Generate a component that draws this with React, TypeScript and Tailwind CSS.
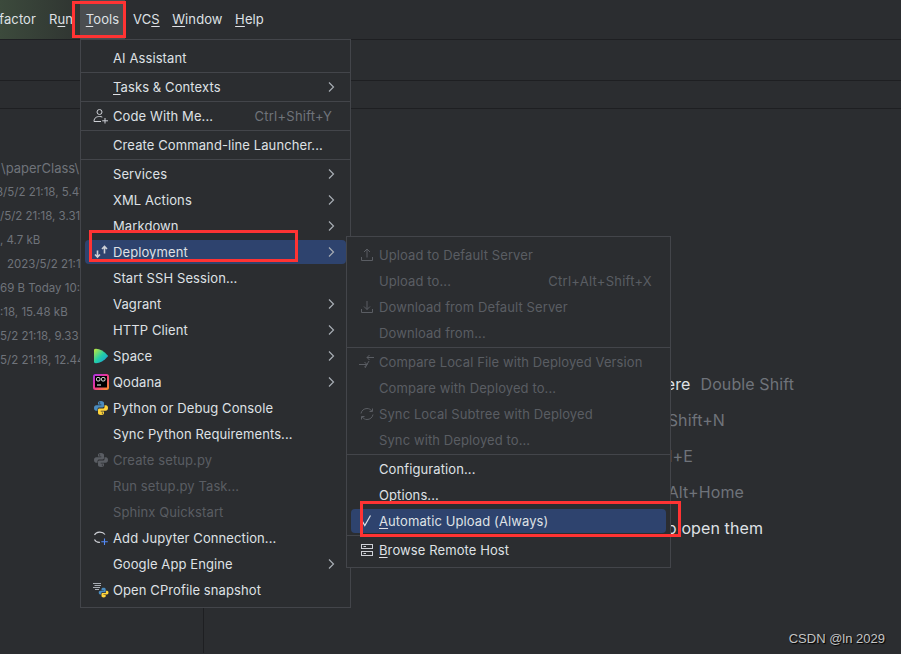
import React from "react";

type Item = {
  label: React.ReactNode;
  icon?: React.ReactNode;
  arrow?: boolean;
  disabled?: boolean;
  selected?: boolean;
  shortcut?: string;
};

const U = ({ children }: { children: React.ReactNode }) => <span className="underline underline-offset-2">{children}</span>;

const Chevron = () => (
  <svg width="8" height="12" viewBox="0 0 8 12" fill="none" className="ml-auto mr-[-1px]">
    <path d="M2 1.5 L6.5 6 L2 10.5" stroke="#a8adb4" strokeWidth="1.2" />
  </svg>
);

const UserPlus = () => (
  <svg width="16" height="16" viewBox="0 0 16 16" fill="none" stroke="#ced0d6" strokeWidth="1">
    <circle cx="6.5" cy="4" r="2.5" />
    <path d="M1 13.5 C1 9.5 4 8.5 6.5 8.5 C7.5 8.5 8.5 8.7 9.3 9.1 M1 13.5 H8" />
    <path d="M12 10 V15.5 M9.2 12.8 H15" />
  </svg>
);

const DeployIcon = () => (
  <svg width="16" height="16" viewBox="0 0 16 16" fill="none" stroke="#ced0d6" strokeWidth="1.6">
    <path d="M4.5 6.5 V13 M2 10.5 L4.5 13 L7 10.5" />
    <path d="M11.5 9.5 V2.5 M9 5 L11.5 2.5 L14 5" />
  </svg>
);

const SpaceIcon = () => (
  <svg width="16" height="16" viewBox="0 0 16 16">
    <defs>
      <linearGradient id="sp" x1="0" y1="0" x2="1" y2="1">
        <stop offset="0" stopColor="#c6e83a" />
        <stop offset="0.5" stopColor="#22cfa8" />
        <stop offset="1" stopColor="#1c8fe6" />
      </linearGradient>
    </defs>
    <path d="M1 2 Q1 0.8 3 0.8 C7 0.8 11 3.2 15.2 8 C11 12.8 7 15.2 3 15.2 Q1 15.2 1 14 Z" fill="url(#sp)" />
  </svg>
);

const QodanaIcon = () => (
  <svg width="16" height="16" viewBox="0 0 16 16">
    <defs>
      <linearGradient id="qd" x1="0" y1="0" x2="1" y2="1">
        <stop offset="0" stopColor="#a832e8" />
        <stop offset="0.5" stopColor="#f0388c" />
        <stop offset="1" stopColor="#ff9a1f" />
      </linearGradient>
    </defs>
    <rect x="0" y="0" width="16" height="16" rx="2.5" fill="url(#qd)" />
    <rect x="2" y="2" width="12" height="11.5" fill="#000" />
    <rect x="3.5" y="3.5" width="3.5" height="3.5" rx="1.2" fill="none" stroke="#fff" strokeWidth="0.9" />
    <rect x="8.5" y="3.5" width="3.5" height="3.5" rx="1.2" fill="none" stroke="#fff" strokeWidth="0.9" />
    <path d="M4 11 H8" stroke="#fff" strokeWidth="1" />
  </svg>
);

const PythonIcon = ({ a = "#4b8bbe", b = "#ffd43b" }: { a?: string; b?: string }) => (
  <svg width="16" height="16" viewBox="0 0 16 16">
    <path d="M8 1 C5.5 1 5 2 5 3 V4.5 H8.3 V5.2 H3.2 C2 5.2 1 6.2 1 8 C1 9.8 2 10.8 3 10.8 H4.5 V9 C4.5 8 5.3 7.4 6.2 7.4 H9.6 C10.5 7.4 11 6.8 11 6 V3 C11 2 10 1 8 1 Z" fill={a} />
    <path d="M8 15 C10.5 15 11 14 11 13 V11.5 H7.7 V10.8 H12.8 C14 10.8 15 9.8 15 8 C15 6.2 14 5.2 13 5.2 H11.5 V7 C11.5 8 10.7 8.6 9.8 8.6 H6.4 C5.5 8.6 5 9.2 5 10 V13 C5 14 6 15 8 15 Z" fill={b} />
    <circle cx="6.6" cy="2.9" r="0.7" fill="#2b2d30" />
    <circle cx="9.4" cy="13.1" r="0.7" fill="#2b2d30" />
  </svg>
);

const JupyterIcon = () => (
  <svg width="16" height="16" viewBox="0 0 16 16" fill="none">
    <path d="M1.5 5 C3 1.5 9.5 1 12 4.5" stroke="#ced0d6" strokeWidth="1.1" />
    <path d="M1.5 9.5 C2.5 11.5 5 12.5 7 12.3" stroke="#ced0d6" strokeWidth="1.1" />
    <path d="M11.5 8.5 V15 M8.3 11.8 H14.8" stroke="#548af7" strokeWidth="1.1" />
  </svg>
);

const ProfileIcon = () => (
  <svg width="16" height="16" viewBox="0 0 16 16">
    <path d="M0 1.5 H8 M1.5 3.5 H8 M0 5.5 H7 M2 7.5 H6" stroke="#a8adb4" strokeWidth="1.2" />
    <g transform="translate(5 5) scale(0.7)">
      <path d="M8 1 C5.5 1 5 2 5 3 V4.5 H8.3 V5.2 H3.2 C2 5.2 1 6.2 1 8 C1 9.8 2 10.8 3 10.8 H4.5 V9 C4.5 8 5.3 7.4 6.2 7.4 H9.6 C10.5 7.4 11 6.8 11 6 V3 C11 2 10 1 8 1 Z" fill="#4b8bbe" />
      <path d="M8 15 C10.5 15 11 14 11 13 V11.5 H7.7 V10.8 H12.8 C14 10.8 15 9.8 15 8 C15 6.2 14 5.2 13 5.2 H11.5 V7 C11.5 8 10.7 8.6 9.8 8.6 H6.4 C5.5 8.6 5 9.2 5 10 V13 C5 14 6 15 8 15 Z" fill="#ffd43b" />
    </g>
  </svg>
);

const dim = "#5a5d63";
const UploadIcon = () => (
  <svg width="16" height="16" viewBox="0 0 16 16" fill="none" stroke={dim} strokeWidth="1">
    <path d="M8 10.5 V2 M5 5 L8 2 L11 5" />
    <path d="M2.5 10 V13.5 H13.5 V10" />
  </svg>
);
const DownloadIcon = () => (
  <svg width="16" height="16" viewBox="0 0 16 16" fill="none" stroke={dim} strokeWidth="1">
    <path d="M8 2 V10.5 M5 7.5 L8 10.5 L11 7.5" />
    <path d="M2.5 10 V13.5 H13.5 V10" />
  </svg>
);
const CompareIcon = () => (
  <svg width="16" height="16" viewBox="0 0 16 16" fill="none" stroke={dim} strokeWidth="1">
    <path d="M15 3.5 H8 M10.5 1 L8 3.5 L10.5 6" />
    <path d="M0 10.5 H8 M5.5 8 L8 10.5 L5.5 13" />
    <path d="M6 14 L10 7" />
  </svg>
);
const SyncIcon = () => (
  <svg width="16" height="16" viewBox="0 0 16 16" fill="none" stroke={dim} strokeWidth="1">
    <path d="M2 7.5 C2.5 4.5 5 2.5 8 2.5 C10 2.5 11.6 3.4 12.7 5" />
    <path d="M13.5 2.5 V5.5 H10.5" />
    <path d="M14 8.5 C13.5 11.5 11 13.5 8 13.5 C6 13.5 4.4 12.6 3.3 11" />
    <path d="M2.5 13.5 V10.5 H5.5" />
  </svg>
);
const HostIcon = () => (
  <svg width="16" height="16" viewBox="0 0 16 16" fill="none" stroke="#ced0d6" strokeWidth="1">
    <rect x="2.5" y="2.5" width="11" height="4" />
    <rect x="2.5" y="9.5" width="11" height="4" />
    <path d="M4.5 4.5 H7 M4.5 11.5 H7" />
  </svg>
);

const Check = () => (
  <svg width="16" height="16" viewBox="0 0 16 16" fill="none" stroke="#dfe1e5" strokeWidth="1.2">
    <path d="M3.5 8.5 L5.8 12.5 L11.5 2.5" />
  </svg>
);

const Row = ({ item }: { item: Item }) => (
  <div className="flex h-[26px] flex-col justify-center px-1">
    <div
      className={`flex h-6 items-center gap-1 rounded pl-2 pr-3 ${item.selected ? "bg-[#2e436e]" : ""} ${item.disabled ? "text-[#5a5d63]" : "text-[#dfe1e5]"}`}
    >
      <span className="flex h-4 w-4 shrink-0 items-center justify-center">{item.icon}</span>
      <span className="whitespace-nowrap">{item.label}</span>
      {item.shortcut && <span className={`ml-auto pr-0.5 whitespace-nowrap tracking-[0.25px] ${item.disabled ? "text-[#5a5d63]" : "text-[#6f737a]"}`}>{item.shortcut}</span>}
      {item.arrow && <Chevron />}
    </div>
  </div>
);

const Sep = () => (
  <div className="flex h-[3px] items-center">
    <div className="h-px w-full bg-[#43454a]" />
  </div>
);

const Menu = ({ groups, className }: { groups: Item[][]; className: string }) => (
  <div className={`absolute border border-[#43454a] bg-[#2b2d30] pt-[5px] pb-1 text-[13px] leading-6 tracking-[0.1px] ${className}`}>
    {groups.map((g, i) => (
      <React.Fragment key={i}>
        {i > 0 && <Sep />}
        {g.map((it, j) => (
          <Row key={j} item={it} />
        ))}
      </React.Fragment>
    ))}
  </div>
);

const tools: Item[][] = [
  [{ label: "AI Assistant" }],
  [{ label: <><U>T</U>asks &amp; Contexts</>, arrow: true }],
  [{ label: "Code With Me...", icon: <UserPlus />, shortcut: "Ctrl+Shift+Y" }],
  [{ label: "Create Command-line Launcher..." }],
  [
    { label: "Services", arrow: true },
    { label: "XML Actions", arrow: true },
    { label: "Markdown", arrow: true },
    { label: <>D<U>e</U>ployment</>, arrow: true, selected: true, icon: <DeployIcon /> },
    { label: "Start SSH Session..." },
    { label: "Vagrant", arrow: true },
    { label: "HTTP Client", arrow: true },
    { label: "Space", arrow: true, icon: <SpaceIcon /> },
    { label: "Qodana", arrow: true, icon: <QodanaIcon /> },
    { label: "Python or Debug Console", icon: <PythonIcon /> },
    { label: "Sync Python Requirements..." },
    { label: "Create setup.py", disabled: true, icon: <PythonIcon a="#5a5d63" b="#5a5d63" /> },
    { label: "Run setup.py Task...", disabled: true },
    { label: "Sphinx Quickstart", disabled: true },
    { label: "Add Jupyter Connection...", icon: <JupyterIcon /> },
    { label: "Google App Engine", arrow: true },
    { label: "Open CProfile snapshot", icon: <ProfileIcon /> },
  ],
];

const deployment: Item[][] = [
  [
    { label: "Upload to Default Server", disabled: true, icon: <UploadIcon /> },
    { label: "Upload to...", disabled: true, shortcut: "Ctrl+Alt+Shift+X" },
    { label: "Download from Default Server", disabled: true, icon: <DownloadIcon /> },
    { label: "Download from...", disabled: true },
  ],
  [
    { label: "Compare Local File with Deployed Version", disabled: true, icon: <CompareIcon /> },
    { label: "Compare with Deployed to...", disabled: true },
    { label: "Sync Local Subtree with Deployed", disabled: true, icon: <SyncIcon /> },
    { label: "Sync with Deployed to...", disabled: true },
  ],
  [
    { label: "Configuration..." },
    { label: "Options..." },
    { label: <><U>A</U>utomatic Upload (Always)</>, selected: true, icon: <Check /> },
  ],
  [{ label: <><U>B</U>rowse Remote Host</>, icon: <HostIcon /> }],
];

const fileRows = ["3/5/2 21:18, 5.41", "/5/2 21:18, 3.31", ", 4.7 kB", "2023/5/2 21:18", "69 B Today 10:3", ":18, 15.48 kB", "5/2 21:18, 9.33", "5/2 21:18, 12.44"];
const fileIndent = ["-ml-1", "", "", "pl-[7px]", "", "", "", ""];

const hints: { main: string; keys?: string; end: string }[] = [
  { main: "Search Everywhere", keys: "Double Shift", end: "pr-[107px]" },
  { main: "Go to File", keys: "Ctrl+Shift+N", end: "pr-[176px]" },
  { main: "Recent Files", keys: "Ctrl+E", end: "pr-[208px]" },
  { main: "Navigation Bar", keys: "Alt+Home", end: "pr-[157px]" },
  { main: "Drop files here to open them", end: "pr-[138px]" },
];

export default function App() {
  return (
    <div className="relative h-[654px] w-[901px] overflow-hidden bg-[#2b2d30] [font-family:Inter,sans-serif] text-[13px]">
      {/* Menu bar */}
      <div className="flex h-10 items-stretch border-b border-[#1e1f22] bg-[#2b2d30] tracking-[0.1px] text-[#dfe1e5]">
        <div className="flex w-20 items-center justify-end overflow-hidden whitespace-nowrap bg-gradient-to-r from-[#3c4a3c] to-[#2f3431] pr-[31px]">
          <span className="mr-[13px]">factor</span>
          <span className="w-0">R<U>u</U>n</span>
        </div>
        <div className="flex w-[45px] items-center justify-center bg-[#4a4d50]"><span><U>T</U>ools</span></div>
        <div className="flex items-center gap-[12.5px] pl-2">
          <span>VC<U>S</U></span>
          <span><U>W</U>indow</span>
          <span><U>H</U>elp</span>
        </div>
      </div>
      {/* Toolbars */}
      <div className="h-[41px] border-b border-[#1e1f22]" />
      <div className="h-[28px] border-b border-[#1e1f22]" />
      {/* Body */}
      <div className="flex h-[544px]">
        <div className="w-[204px] shrink-0 border-r border-[#1e1f22] pt-[47px] text-[#6f737a]">
          <div className="h-6 overflow-hidden whitespace-nowrap pl-px text-[13px] leading-6">\paperClass\</div>
          <div className="text-[11.5px] leading-6">
            {fileRows.map((t, i) => (
              <div key={i} className={`h-6 whitespace-nowrap ${fileIndent[i]}`}>{t}</div>
            ))}
          </div>
        </div>
        <div className="flex flex-1 flex-col pt-[257px] text-[16px] leading-9">
          {hints.map((h) => (
            <div key={h.main} className={`flex h-9 justify-end gap-2.5 whitespace-nowrap tracking-[0.1px] ${h.end}`}>
              <span className="text-[#dfe1e5]">{h.main}</span>
              {h.keys && <span className="text-[#6f737a]">{h.keys}</span>}
            </div>
          ))}
        </div>
      </div>

      <Menu groups={tools} className="left-20 top-[39px] w-[271px]" />
      <Menu groups={deployment} className="left-[346px] top-[236px] w-[325px]" />

      {/* Annotations drawn over the screenshot */}
      <div className="absolute left-[72px] top-px h-[37px] w-[54px] border-[3px] border-[#ff3333]" />
      <div className="absolute left-[89px] top-[230px] h-[32px] w-[209px] border-[3px] border-[#ff3333]" />
      <div className="absolute left-[360px] top-[501px] h-[36px] w-[321px] border-[3px] border-[#ff3333]" />

      <div className="absolute right-[16px] top-[631px] [font-family:'Liberation_Sans',sans-serif] text-[13px] leading-4 text-[#c4c4c4] [text-shadow:1px_1px_1px_#000]">CSDN @ln 2029</div>
    </div>
  );
}
